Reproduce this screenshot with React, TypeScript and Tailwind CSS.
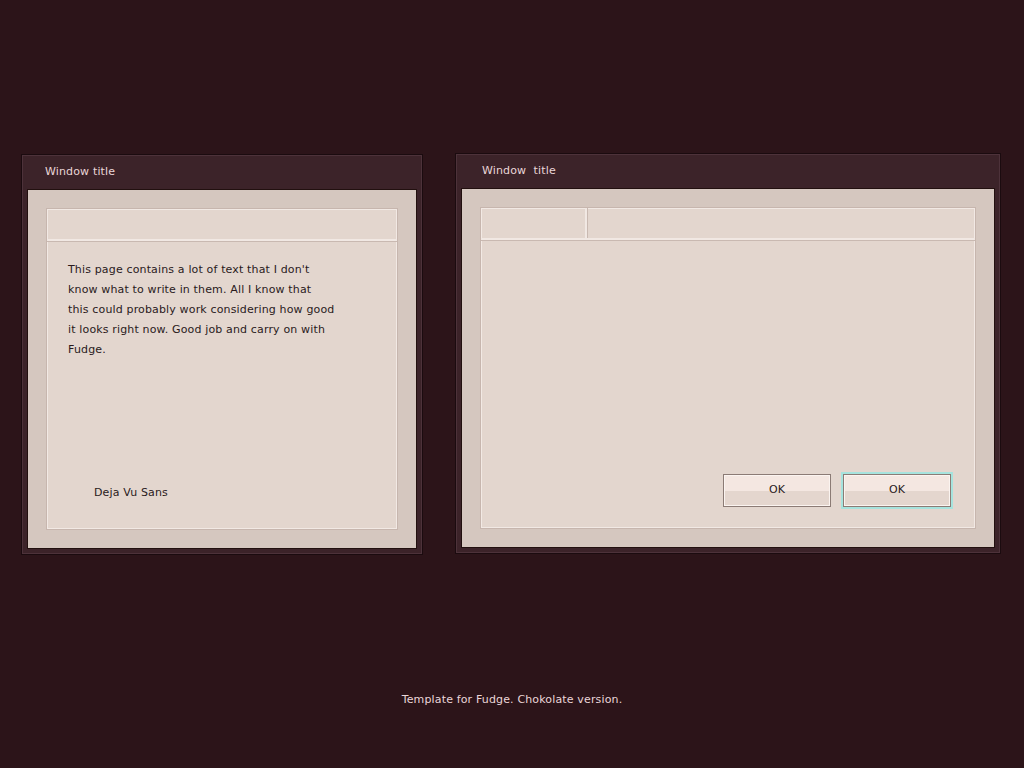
import React from "react";

const font = { fontFamily: '"DejaVu Sans", "Liberation Sans", sans-serif' };

const lines = [
  "This page contains a lot of text that I don't",
  "know what to write in them. All I know that",
  "this could probably work considering how good",
  "it looks right now. Good job and carry on with",
  "Fudge.",
];

function Window({
  title,
  width,
  titlePad,
  children,
}: {
  title: string;
  width: string;
  titlePad: string;
  children: React.ReactNode;
}) {
  return (
    <div
      className={`${width} flex h-[401px] flex-col border border-[#1b0b0f] bg-[#3c2329] px-[5px] pb-[5px] shadow-[inset_0_0_0_1px_#4d323a]`}
    >
      <div
        className={`flex h-[34px] items-center whitespace-pre ${titlePad} text-[11px] tracking-[0.15px] text-[#ead6d8]`}
      >
        {title}
      </div>
      <div className="flex flex-1 flex-col border border-[#22100f] bg-[#d5c7bf] p-[18px]">
        {children}
      </div>
    </div>
  );
}

function Button({ focused }: { focused?: boolean }) {
  return (
    <button
      className={`flex h-[33px] w-[108px] items-center justify-center border border-[#8b7b75] bg-[linear-gradient(#f4e7e1_50%,#e4d6ce_50%)] text-[11px] text-[#2a1a1c] shadow-[inset_0_0_0_1px_#fbf4f0] ${
        focused ? "outline-2 outline-[#a6e3dd]" : ""
      }`}
    >
      OK
    </button>
  );
}

export default function App() {
  return (
    <div className="min-h-screen bg-[#2c1419] pt-[154px]" style={font}>
      <div className="flex items-start gap-[32px] pl-[21px]">
        <Window title="Window title" width="w-[402px]" titlePad="pl-[18px]">
          <div className="flex flex-1 flex-col border border-[#c7b6ae] bg-[#e3d6ce] shadow-[inset_0_0_0_1px_#f2e9e4]">
            <div className="h-[32px] border-b-2 border-b-[#f1e8e3] shadow-[0_1px_0_#c9b9b1]" />
            <div className="mt-[19px] ml-[21px] text-[11px] leading-[20px] tracking-[0.15px] text-[#2a1a1c]">
              {lines.map((l) => (
                <div key={l} className="whitespace-nowrap">
                  {l}
                </div>
              ))}
            </div>
            <div className="mt-auto mb-[28px] pl-[47px] text-[11px] tracking-[0.15px] text-[#2a1a1c]">
              Deja Vu Sans
            </div>
          </div>
        </Window>
        <div className="-mt-px">
          <Window title="Window  title" width="w-[546px]" titlePad="pl-[21px]">
            <div className="flex flex-1 flex-col border border-[#c7b6ae] bg-[#e3d6ce] shadow-[inset_0_0_0_1px_#f2e9e4]">
              <div className="flex h-[32px] border-b-2 border-b-[#f1e8e3] shadow-[0_1px_0_#c9b9b1]">
                <div className="w-[106px] border-r-2 border-r-[#f1e8e3] shadow-[1px_0_0_#c9b9b1]" />
                <div className="flex-1" />
              </div>
              <div className="mt-auto mb-[21px] mr-[24px] flex justify-end gap-[12px]">
                <Button />
                <Button focused />
              </div>
            </div>
          </Window>
        </div>
      </div>
      <p className="mt-[137px] text-center text-[11px] tracking-[0.15px] text-[#ead6d8]">
        Template for Fudge. Chokolate version.
      </p>
    </div>
  );
}
